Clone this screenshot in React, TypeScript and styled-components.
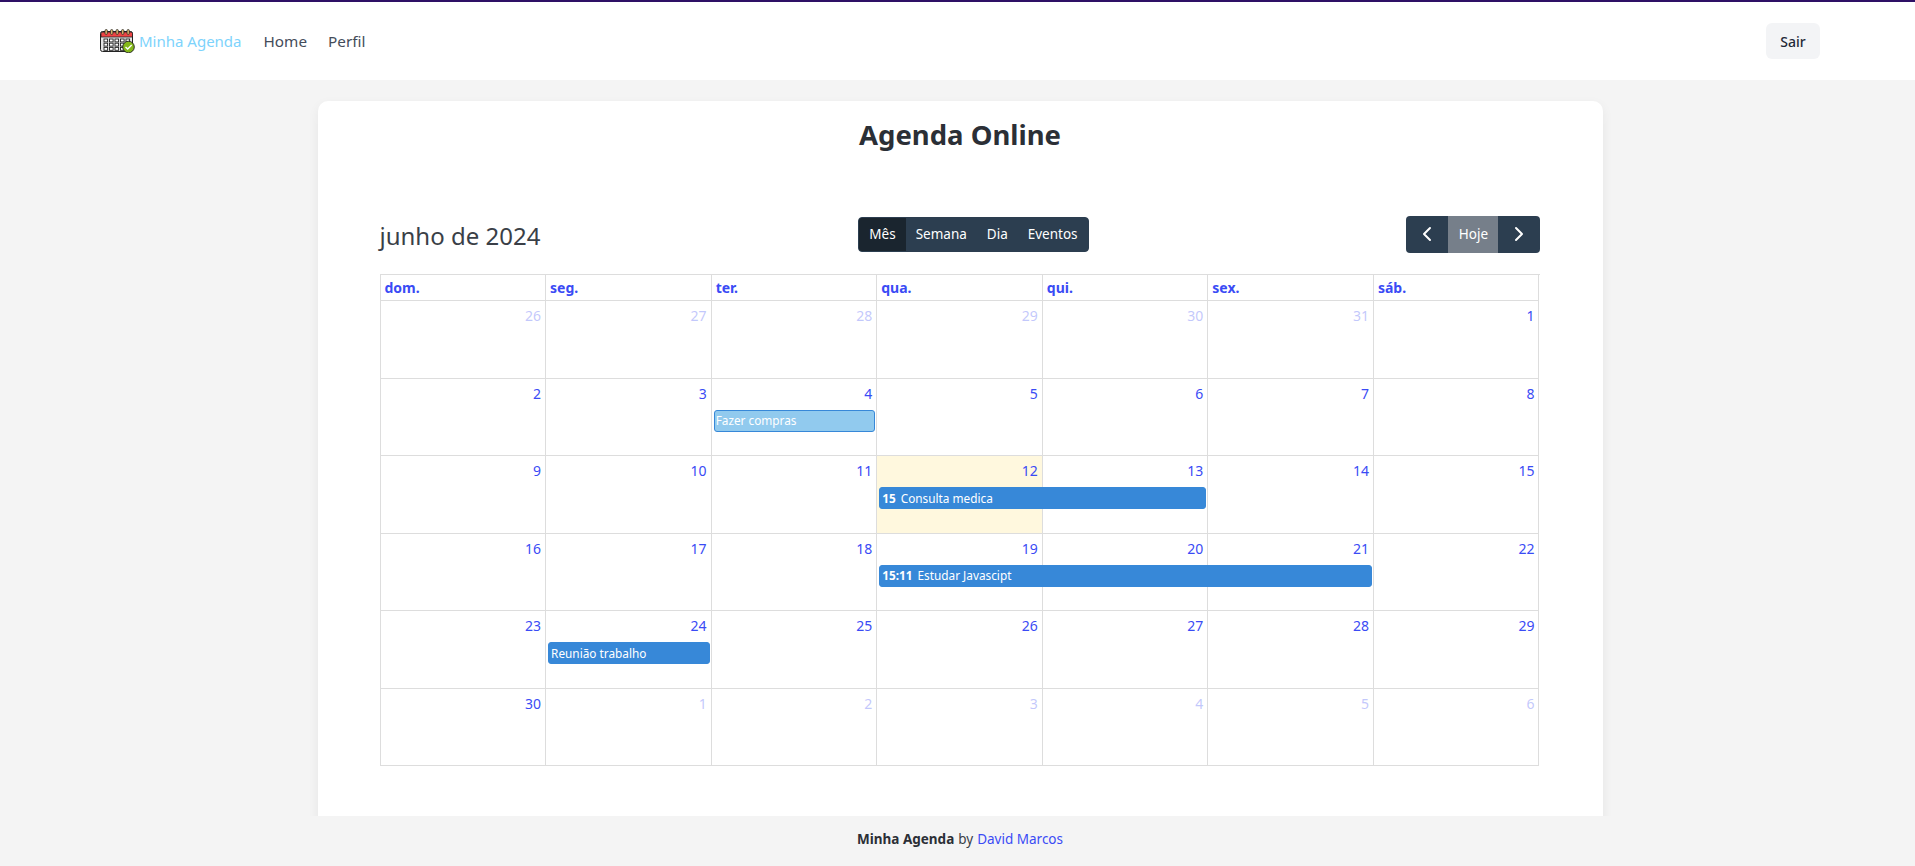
import React from 'react';
import styled, { createGlobalStyle } from 'styled-components';
import { FiChevronLeft, FiChevronRight } from 'react-icons/fi';

const GlobalStyle = createGlobalStyle`
  html, body {
    margin: 0;
    height: 100%;
    overflow: hidden;
    background: #f4f4f4;
    font-family: "Noto Sans", "Open Sans", sans-serif;
  }
  * { box-sizing: border-box; }
`

const Page = styled.div`
  height: 866px;
  display: flex;
  flex-direction: column;
`
const Navbar = styled.nav`
  height: 80px;
  flex-shrink: 0;
  background: #fff;
  border-top: 2px solid #2e1065;
  padding: 0 95px 0 100px;
  display: flex;
  align-items: center;
  justify-content: space-between;
`
const NavLeft = styled.div`
  display: flex;
  align-items: center;
`
const Brand = styled.a`
  display: flex;
  align-items: center;
  gap: 4px;
  margin-right: 22px;
  color: #7dd3fc;
  font-size: 15px;
`
const NavLink = styled.a`
  color: #444c5a;
  font-size: 15.3px;
  margin-right: 21px;
`
const LogoutButton = styled.button`
  width: 54px;
  height: 36px;
  border: 0;
  border-radius: 6px;
  background: #f3f4f6;
  color: #1f2937;
  font: 500 14px "Noto Sans", sans-serif;
`
const Main = styled.main`
  flex: 1;
  min-height: 0;
  overflow: hidden;
  padding: 21px 0 0 5px;
  display: flex;
  justify-content: center;
`
const Card = styled.section`
  width: 1285px;
  height: 760px;
  flex-shrink: 0;
  background: #fff;
  border-radius: 10px;
  box-shadow: 0 4px 12px rgba(0, 0, 0, 0.06);
  padding: 16px 62px 0;
`
const Title = styled.h1`
  margin: 0;
  text-align: center;
  color: #2b2f36;
  font-size: 27.5px;
  line-height: 36px;
  font-weight: 700;
`
const Toolbar = styled.div`
  margin-top: 62px;
  height: 38px;
  display: flex;
  align-items: center;
  justify-content: space-between;
`
const MonthLabel = styled.h2`
  margin: 2px 0 0;
  font-size: 24px;
  font-weight: 400;
  color: #3a3f47;
`
const ViewGroup = styled.div`
  display: flex;
  height: 35px;
  border-radius: 4px;
  overflow: hidden;
  background: #2c3e50;
  border: 1px solid #2c3e50;
`
const ViewButton = styled.button<{ $active?: boolean }>`
  border: 0;
  padding: 0 10px;
  background: ${p => (p.$active ? '#1a252f' : '#2c3e50')};
  color: #fff;
  font: 400 13.5px "Noto Sans", sans-serif;
`
const NavGroup = styled.div`
  display: flex;
  height: 37px;
  border-radius: 4px;
  overflow: hidden;
`
const ArrowButton = styled.button`
  width: 42px;
  border: 0;
  padding: 0;
  background: #2c3e50;
  color: #fff;
  display: flex;
  align-items: center;
  justify-content: center;
  font-size: 24px;
`
const TodayButton = styled.button`
  width: 50px;
  border: 0;
  padding: 0;
  background: #767f8a;
  color: #fff;
  font: 400 13.5px "Noto Sans", sans-serif;
`
const Calendar = styled.div`
  margin-top: 20.5px;
  width: 1160px;
  border-top: 1px solid #ddd;
  border-left: 1px solid #ddd;
`
const HeaderRow = styled.div`
  display: grid;
  grid-template-columns: repeat(7, 1fr);
`
const HeaderCell = styled.div`
  height: 26.5px;
  padding: 0 4px;
  line-height: 26px;
  border-right: 1px solid #ddd;
  border-bottom: 1px solid #ddd;
  color: #3a4bf5;
  font-size: 14px;
  font-weight: 700;
`
const WeekRow = styled.div`
  height: 77.5px;
  display: grid;
  grid-template-columns: repeat(7, 1fr);
  grid-template-rows: 31px 23px 1fr;
`
const DayCell = styled.div<{ $col: number; $today?: boolean }>`
  grid-column: ${p => p.$col};
  grid-row: 1 / -1;
  border-right: 1px solid #ddd;
  border-bottom: 1px solid #ddd;
  background: ${p => (p.$today ? '#fff8de' : 'transparent')};
`
const DayNumber = styled.div<{ $outside?: boolean }>`
  padding: 5px 4px 0;
  text-align: right;
  color: #3a4bf5;
  opacity: ${p => (p.$outside ? 0.3 : 1)};
  font-size: 14px;
  line-height: 20px;
`
const EventBar = styled.div<{ $start: number; $span: number; $past?: boolean }>`
  grid-column: ${p => p.$start} / span ${p => p.$span};
  grid-row: 2;
  z-index: 1;
  margin: 0 2px 1px;
  height: 22px;
  padding: 0 ${p => (p.$past ? '1px' : '2px')} 1px;
  display: flex;
  gap: 5px;
  align-items: center;
  border: 1px solid #3788d8;
  border-radius: 3px;
  background: ${p => (p.$past ? '#91caee' : '#3788d8')};
  color: #fff;
  font-size: 11.8px;
  white-space: nowrap;
  overflow: hidden;
`
const EventTime = styled.b`
  font-weight: 700;
`
const Footer = styled.footer`
  height: 50px;
  flex-shrink: 0;
  background: #f4f4f4;
  padding: 0 0 4px 5px;
  display: flex;
  align-items: center;
  justify-content: center;
  gap: 4px;
  color: #3a3f47;
  font-size: 13.5px;
`
const FooterBrand = styled.b`
  color: #2b2f36;
`
const FooterLink = styled.a`
  color: #3a4bf5;
`

type CalEvent = { start: number; span: number; time?: string; title: string; past?: boolean };

const weeks: { days: number[]; firstIn: number; lastIn: number; events: CalEvent[]; today?: number }[] = [
  { days: [26, 27, 28, 29, 30, 31, 1], firstIn: 6, lastIn: 6, events: [] },
  { days: [2, 3, 4, 5, 6, 7, 8], firstIn: 0, lastIn: 6, events: [{ start: 3, span: 1, title: 'Fazer compras', past: true }] },
  { days: [9, 10, 11, 12, 13, 14, 15], firstIn: 0, lastIn: 6, today: 3, events: [{ start: 4, span: 2, time: '15', title: 'Consulta medica' }] },
  { days: [16, 17, 18, 19, 20, 21, 22], firstIn: 0, lastIn: 6, events: [{ start: 4, span: 3, time: '15:11', title: 'Estudar Javascipt' }] },
  { days: [23, 24, 25, 26, 27, 28, 29], firstIn: 0, lastIn: 6, events: [{ start: 2, span: 1, title: 'Reunião trabalho' }] },
  { days: [30, 1, 2, 3, 4, 5, 6], firstIn: 0, lastIn: 0, events: [] },
];

const weekdays = ['dom.', 'seg.', 'ter.', 'qua.', 'qui.', 'sex.', 'sáb.'];

const Logo = () => (
  <svg width="35" height="24" viewBox="0 0 35 24">
    <rect x="0.5" y="2.5" width="32" height="20" rx="2" fill="#e5e5e5" stroke="#222" />
    <path d="M1 8V4.5A2 2 0 0 1 3 3h28a2 2 0 0 1 1.5 1.5V8z" fill="#ef4444" stroke="#222" strokeWidth="0.8" />
    {[5, 10.5, 16, 21.5, 27].map(x => (
      <rect key={x} x={x} y="0.5" width="2.4" height="5" rx="1.2" fill="#d9b46a" stroke="#222" strokeWidth="0.7" />
    ))}
    {[10, 14.2, 18.4].map(y =>
      [4, 9.5, 15, 20.5, 26].map(x => (
        <rect key={`${x}-${y}`} x={x} y={y} width="3.6" height="2.9" fill="#fff" stroke="#222" strokeWidth="0.9" />
      ))
    )}
    <circle cx="28.5" cy="18" r="5.8" fill="#84b81a" stroke="#222" strokeWidth="0.9" />
    <path d="M25.5 18l2.2 2 4-4" fill="none" stroke="#fff" strokeWidth="1.3" />
  </svg>
);

const App = (): JSX.Element => {
  return (
    <Page>
      <GlobalStyle />
      <Navbar>
        <NavLeft>
          <Brand><Logo />Minha Agenda</Brand>
          <NavLink>Home</NavLink>
          <NavLink>Perfil</NavLink>
        </NavLeft>
        <LogoutButton>Sair</LogoutButton>
      </Navbar>
      <Main>
        <Card>
          <Title>Agenda Online</Title>
          <Toolbar>
            <MonthLabel>junho de 2024</MonthLabel>
            <ViewGroup>
              <ViewButton $active>Mês</ViewButton>
              <ViewButton>Semana</ViewButton>
              <ViewButton>Dia</ViewButton>
              <ViewButton>Eventos</ViewButton>
            </ViewGroup>
            <NavGroup>
              <ArrowButton><FiChevronLeft /></ArrowButton>
              <TodayButton>Hoje</TodayButton>
              <ArrowButton><FiChevronRight /></ArrowButton>
            </NavGroup>
          </Toolbar>
          <Calendar>
            <HeaderRow>
              {weekdays.map(d => <HeaderCell key={d}>{d}</HeaderCell>)}
            </HeaderRow>
            {weeks.map((w, i) => (
              <WeekRow key={i}>
                {w.days.map((d, j) => (
                  <DayCell key={j} $col={j + 1} $today={w.today === j}>
                    <DayNumber $outside={j < w.firstIn || j > w.lastIn}>{d}</DayNumber>
                  </DayCell>
                ))}
                {w.events.map(e => (
                  <EventBar key={e.title} $start={e.start} $span={e.span} $past={e.past}>
                    {e.time && <EventTime>{e.time}</EventTime>}
                    <span>{e.title}</span>
                  </EventBar>
                ))}
              </WeekRow>
            ))}
          </Calendar>
        </Card>
      </Main>
      <Footer>
        <FooterBrand>Minha Agenda</FooterBrand> by <FooterLink>David Marcos</FooterLink>
      </Footer>
    </Page>
  );
};

export default App;
